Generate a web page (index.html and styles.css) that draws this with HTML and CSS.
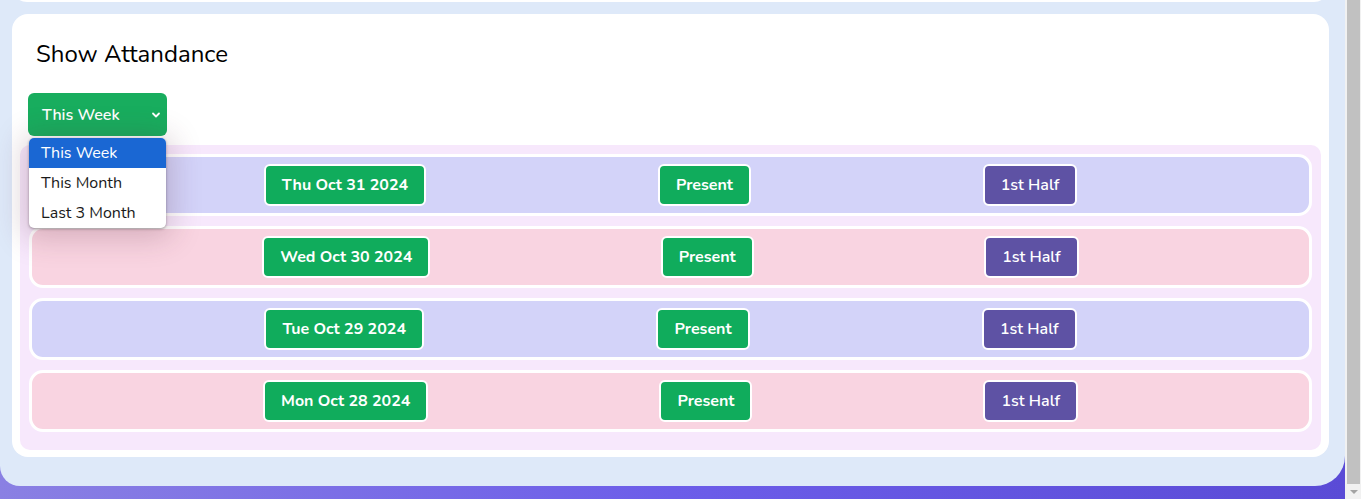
FILE: index.html
```html
<!DOCTYPE html>
<html>
<head>
<meta charset="utf-8">
<link rel="stylesheet" href="styles.css">
</head>
<body>
<div class="window">
  <div class="page">
    <div class="panel">
      <div class="prev-card"></div>
      <div class="card">
        <h2 class="title">Show Attandance</h2>
        <div class="filter">
          <div class="select">
            <span>This Week</span>
            <svg class="chev" width="10" height="8" viewBox="0 0 10 8"><path d="M2 2.5 L5 5.5 L8 2.5" fill="none" stroke="#fff" stroke-width="1.8" stroke-linecap="round" stroke-linejoin="round"/></svg>
          </div>
          <ul class="menu">
            <li class="opt active">This Week</li>
            <li class="opt">This Month</li>
            <li class="opt">Last 3 Month</li>
          </ul>
        </div>
        <div class="list">
          <div class="row lav">
            <span class="badge green">Thu Oct 31 2024</span>
            <span class="badge green">Present</span>
            <span class="badge purple">1st Half</span>
          </div>
          <div class="row pink">
            <span class="badge green">Wed Oct 30 2024</span>
            <span class="badge green">Present</span>
            <span class="badge purple">1st Half</span>
          </div>
          <div class="row lav">
            <span class="badge green">Tue Oct 29 2024</span>
            <span class="badge green">Present</span>
            <span class="badge purple">1st Half</span>
          </div>
          <div class="row pink">
            <span class="badge green">Mon Oct 28 2024</span>
            <span class="badge green">Present</span>
            <span class="badge purple">1st Half</span>
          </div>
        </div>
      </div>
    </div>
  </div>
  <div class="scrollbar">
    <div class="thumb"></div>
    <div class="arrow"></div>
  </div>
</div>
</body>
</html>
```

FILE: styles.css
```css
* { box-sizing: border-box; }
html, body { margin: 0; padding: 0; }
body {
  width: 1361px;
  height: 499px;
  overflow: hidden;
  font-family: "Nunito", "Lato", "Noto Sans", sans-serif;
}
.window {
  display: flex;
  height: 499px;
}
.page {
  width: 1345px;
  height: 499px;
  background: linear-gradient(90deg, #8a80e3 0%, #6c5de9 50%, #5a4bd6 100%);
}
.panel {
  height: 486px;
  background: #dee9f9;
  border-radius: 0 0 30px 20px;
  padding: 0 16px 0 12px;
  display: flex;
  flex-direction: column;
}
.prev-card {
  height: 30px;
  margin-top: -28px;
  background: #fff;
  border-radius: 16px;
  flex-shrink: 0;
}
.card {
  margin-top: 12px;
  height: 443px;
  background: #fff;
  border-radius: 16px;
  padding: 0 8px 7px 8px;
  display: flex;
  flex-direction: column;
}
.title {
  margin: 0;
  padding: 26px 0 0 16px;
  height: 79px;
  font-size: 24px;
  font-weight: 400;
  color: #000;
  line-height: 28px;
}
.filter {
  position: relative;
  padding-left: 8px;
  height: 52px;
}
.select {
  width: 139px;
  height: 43px;
  background: #18ad5e;
  border-radius: 6px;
  color: #fff;
  font-size: 16px;
  font-weight: 600;
  display: flex;
  align-items: center;
  justify-content: space-between;
  padding: 0 6px 0 14px;
}
.chev { display: block; }
.menu {
  position: absolute;
  left: 9px;
  top: 45px;
  width: 137px;
  margin: 0;
  padding: 0;
  list-style: none;
  background: #fff;
  border-radius: 5px;
  overflow: hidden;
  z-index: 5;
  box-shadow: 0 4px 30px 6px rgba(90, 40, 60, 0.22), 0 1px 3px rgba(0,0,0,0.35);
}
.opt {
  height: 30px;
  line-height: 30px;
  padding-left: 12px;
  font-size: 16px;
  color: #1a1a1a;
}
.opt.active {
  background: #1a67d3;
  color: #fff;
}
.list {
  flex: 1;
  background: #f7e8fc;
  border-radius: 10px;
  padding: 9px 9px 8px 9px;
  display: flex;
  flex-direction: column;
  gap: 10px;
}
.row {
  height: 62px;
  border: 3px solid #fff;
  border-radius: 14px;
  display: flex;
  align-items: center;
  justify-content: space-evenly;
}
.row.lav { background: #d3d3f9; }
.row.pink { background: #f9d4e1; }
.badge {
  height: 42px;
  border: 2px solid #fff;
  border-radius: 6px;
  color: #fff;
  font-size: 16px;
  font-weight: 700;
  padding: 0 16px;
  display: flex;
  align-items: center;
}
.badge.green { background: #10ac5c; }
.badge.purple { background: #5e52a4; font-weight: 600; }
.scrollbar {
  width: 16px;
  height: 499px;
  background: #f1f1f1;
  display: flex;
  flex-direction: column;
  padding-left: 2px;
  padding-right: 1px;
}
.thumb {
  height: 484px;
  background: #c1c1c1;
}
.arrow {
  flex: 1;
  display: flex;
  justify-content: center;
  align-items: center;
}
.arrow::before {
  content: "";
  width: 0;
  height: 0;
  border-left: 4px solid transparent;
  border-right: 4px solid transparent;
  border-top: 4px solid #a3a3a3;
}
```
